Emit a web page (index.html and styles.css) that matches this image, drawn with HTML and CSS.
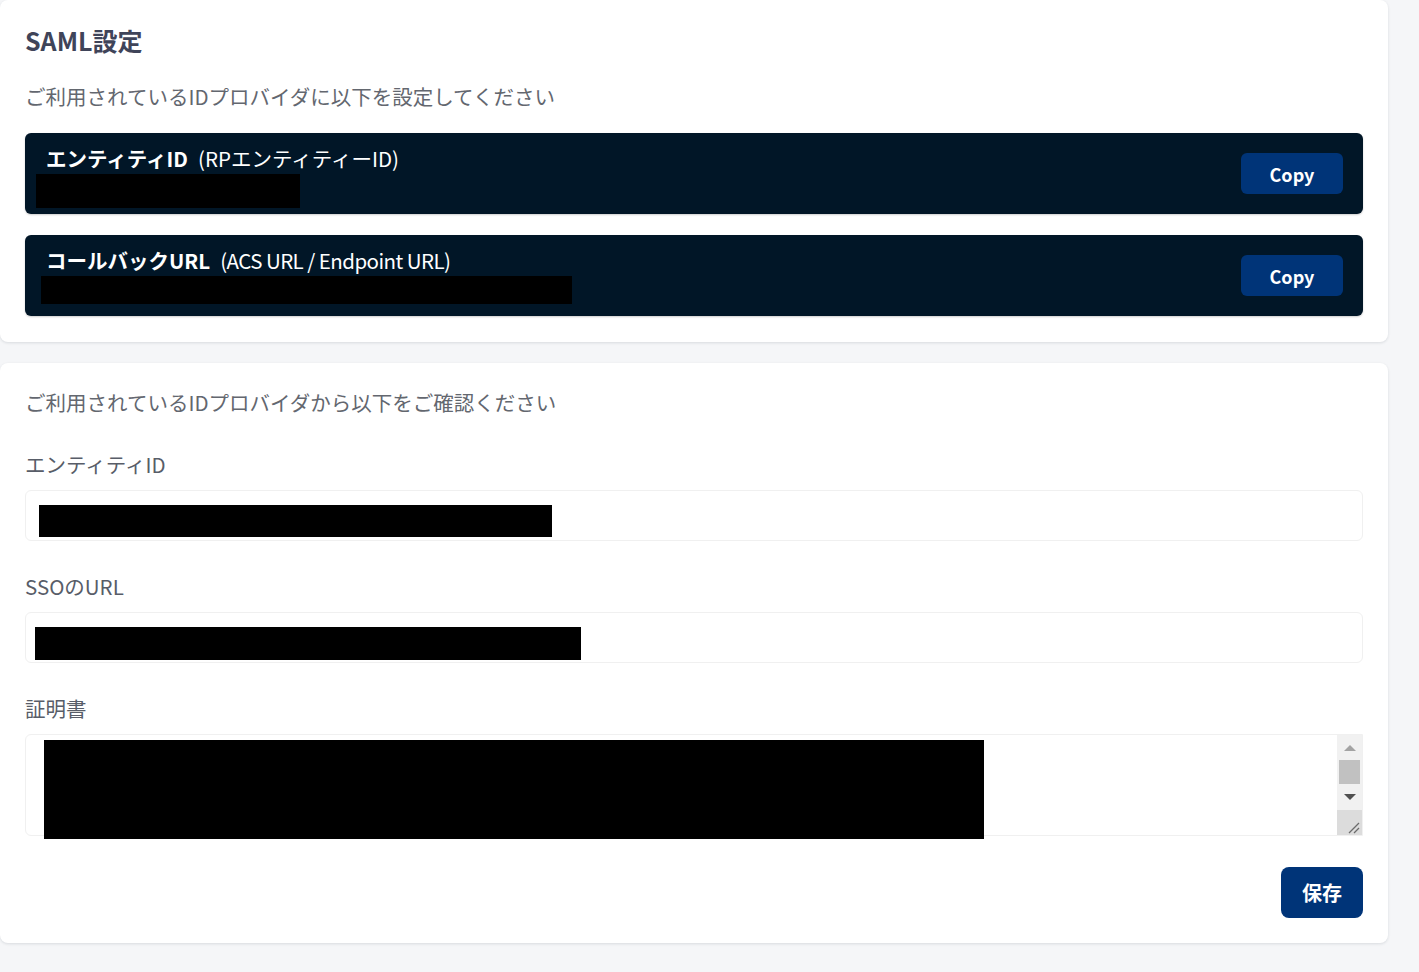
FILE: index.html
```html
<!DOCTYPE html>
<html lang="ja">
<head>
<meta charset="utf-8">
<title>SAML設定</title>
<link rel="stylesheet" href="styles.css">
</head>
<body>
<div class="page">
  <section class="card card-top">
    <h1 class="title">SAML設定</h1>
    <p class="lead">ご利用されているIDプロバイダに以下を設定してください</p>
    <div class="dark-box">
      <div class="dark-info">
        <div class="dark-label"><strong>エンティティID</strong><span class="paren">(RPエンティティーID)</span></div>
        <div class="redact redact-a"></div>
      </div>
      <button class="copy-btn">Copy</button>
    </div>
    <div class="dark-box">
      <div class="dark-info">
        <div class="dark-label"><strong>コールバックURL</strong><span class="paren paren-latin">(ACS URL / Endpoint URL)</span></div>
        <div class="redact redact-b"></div>
      </div>
      <button class="copy-btn">Copy</button>
    </div>
  </section>

  <section class="card card-bottom">
    <p class="lead">ご利用されているIDプロバイダから以下をご確認ください</p>
    <div class="field field-first">
      <div class="field-label">エンティティID</div>
      <div class="input"><div class="redact redact-c"></div></div>
    </div>
    <div class="field">
      <div class="field-label">SSOのURL</div>
      <div class="input"><div class="redact redact-d"></div></div>
    </div>
    <div class="field">
      <div class="field-label">証明書</div>
      <div class="textarea">
        <div class="textarea-body"><div class="redact redact-e"></div></div>
        <div class="scrollbar">
          <div class="sb-up"></div>
          <div class="sb-thumb"></div>
          <div class="sb-down"></div>
          <div class="sb-space"></div>
          <div class="sb-corner">
            <svg width="25" height="25" viewBox="0 0 25 25"><path d="M12 23 L22 13 M17 23 L22 18" stroke="#6b6b6b" stroke-width="1.3" fill="none"/></svg>
          </div>
        </div>
      </div>
    </div>
    <div class="actions">
      <button class="save-btn">保存</button>
    </div>
  </section>
</div>
</body>
</html>
```

FILE: styles.css
```css
html, body {
  margin: 0;
  padding: 0;
  background: #f5f6f8;
}
body {
  font-family: "Noto Sans CJK JP", "Noto Sans", sans-serif;
  color: #5b606b;
}
.page {
  width: 1388px;
  display: flex;
  flex-direction: column;
  gap: 21px;
  padding-bottom: 29px;
}
.card {
  background: #ffffff;
  border-radius: 8px;
  box-shadow: 0 1px 3px rgba(20, 30, 50, 0.12);
}
.card-top {
  padding: 22px 25px 26px 25px;
}
.card-bottom {
  padding: 25px 25px 25px 25px;
}
.title {
  margin: 0;
  font-size: 25px;
  line-height: 36px;
  font-weight: 700;
  color: #3f4459;
}
.lead {
  margin: 24px 0 0 0;
  font-size: 20.5px;
  line-height: 28px;
  color: #63676f;
}
.card-bottom .lead {
  margin: 0;
}
.dark-box {
  margin-top: 21px;
  height: 81px;
  box-sizing: border-box;
  background: #011627;
  border-radius: 6px;
  display: flex;
  align-items: center;
  justify-content: space-between;
  padding: 0 20px 0 21px;
  box-shadow: 0 1px 2px rgba(0,0,0,0.2);
}
.lead + .dark-box {
  margin-top: 23px;
}
.dark-info {
  align-self: stretch;
  padding-top: 11px;
  box-sizing: border-box;
}
.dark-label {
  color: #ffffff;
  font-size: 20.5px;
  line-height: 28px;
  white-space: nowrap;
}
.dark-label strong {
  font-weight: 700;
}
.paren {
  margin-left: 10px;
  font-weight: 400;
}
.paren-latin {
  letter-spacing: -0.55px;
}
.redact {
  background: #000000;
}
.redact-a {
  margin: 2px 0 0 -10px;
  width: 264px;
  height: 34px;
}
.redact-b {
  margin: 2px 0 0 -5px;
  width: 531px;
  height: 28px;
}
.copy-btn {
  width: 102px;
  height: 41px;
  border: none;
  border-radius: 6px;
  background: #003478;
  color: #ffffff;
  font-family: "Noto Sans CJK JP", "Noto Sans", sans-serif;
  font-size: 18px;
  font-weight: 700;
  padding: 0;
}
.field {
  margin-top: 31px;
}
.field-first {
  margin-top: 34px;
}
.field-label {
  font-size: 20.5px;
  line-height: 28px;
  color: #585d68;
}
.input {
  margin-top: 12px;
  height: 51px;
  box-sizing: border-box;
  border: 1px solid #f0f0f0;
  border-radius: 6px;
  padding: 14px 0 0 13px;
}
.redact-c {
  width: 513px;
  height: 32px;
}
.field + .field .input {
  padding: 14px 0 0 9px;
}
.redact-d {
  width: 546px;
  height: 33px;
}
.textarea {
  margin-top: 12px;
  height: 102px;
  box-sizing: border-box;
  border: 1px solid #f0f0f0;
  border-radius: 6px 0 0 6px;
  display: flex;
}
.textarea-body {
  flex: 1;
  padding: 5px 0 0 18px;
}
.redact-e {
  width: 940px;
  height: 99px;
}
.scrollbar {
  width: 25px;
  display: flex;
  flex-direction: column;
  background: #f1f1f1;
}
.sb-up {
  height: 25px;
  display: flex;
  align-items: center;
  justify-content: center;
}
.sb-up::before {
  content: "";
  border-left: 6px solid transparent;
  border-right: 6px solid transparent;
  border-bottom: 6px solid #a3a3a3;
}
.sb-thumb {
  margin: 0 2px;
  height: 24px;
  background: #c1c1c1;
}
.sb-down {
  height: 25px;
  display: flex;
  align-items: center;
  justify-content: center;
}
.sb-down::before {
  content: "";
  border-left: 6px solid transparent;
  border-right: 6px solid transparent;
  border-top: 6px solid #505050;
}
.sb-space {
  flex: 1;
}
.sb-corner {
  height: 25px;
  background: #dcdcdc;
}
.sb-corner svg {
  display: block;
}
.actions {
  margin-top: 31px;
  display: flex;
  justify-content: flex-end;
}
.save-btn {
  width: 82px;
  height: 51px;
  border: none;
  border-radius: 8px;
  background: #003478;
  color: #ffffff;
  font-family: "Noto Sans CJK JP", "Noto Sans", sans-serif;
  font-size: 20px;
  font-weight: 700;
  padding: 0;
}
```
